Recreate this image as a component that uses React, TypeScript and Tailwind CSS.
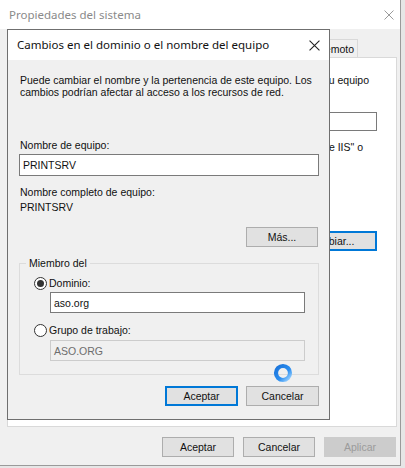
import React from 'react';

const body = "font-['Liberation_Sans',Arial,sans-serif] text-[10.5px] leading-[12px]";
const title = "font-['Noto_Sans',sans-serif] whitespace-nowrap";

function WinButton({ label, primary, disabled, width = 'w-[72px]' }: { label: string; primary?: boolean; disabled?: boolean; width?: string }) {
    return (
        <button
            className={`${width} h-[20px] flex items-center justify-center shrink-0 ${body} ${
                disabled
                    ? 'bg-[#cccccc] border border-[#cccccc] text-[#9b9b9b]'
                    : primary
                    ? 'bg-[#e1e1e1] border-2 border-[#0078d7] text-[#111]'
                    : 'bg-[#e1e1e1] border border-[#adadad] text-[#111]'
            }`}
        >
            {label}
        </button>
    );
}

function Radio({ checked }: { checked?: boolean }) {
    return (
        <span className="w-[13px] h-[13px] rounded-full border border-[#333] bg-white flex items-center justify-center shrink-0">
            {checked && <span className="w-[7px] h-[7px] rounded-full bg-[#333]" />}
        </span>
    );
}

function CloseIcon({ color, size }: { color: string; size: number }) {
    return (
        <svg width={size} height={size} viewBox="0 0 10 10">
            <path d="M0.5 0.5 L9.5 9.5 M9.5 0.5 L0.5 9.5" stroke={color} strokeWidth="1" fill="none" />
        </svg>
    );
}

function BusyCursor() {
    return (
        <svg width="22" height="22" viewBox="0 0 22 22">
            <defs>
                <linearGradient id="busy" x1="0" y1="0" x2="1" y2="1">
                    <stop offset="0" stopColor="#1a73d9" />
                    <stop offset="0.6" stopColor="#2b8ef0" />
                    <stop offset="1" stopColor="#9fd4ff" />
                </linearGradient>
            </defs>
            <circle cx="11" cy="11" r="7" stroke="url(#busy)" strokeWidth="4.2" fill="none" />
        </svg>
    );
}

function NameChangeDialog() {
    return (
        <div className="absolute left-[7px] top-[29px] w-[323px] h-[391px] border border-[#6f6f6f] bg-[#f0f0f0] flex flex-col">
            {/* Title bar */}
            <div className="h-[30px] bg-white flex items-center justify-between pl-[9px] pr-[9px] shrink-0">
                <span className={`${title} text-[11.5px] text-[#111]`}>
                    Cambios en el dominio o el nombre del equipo
                </span>
                <CloseIcon color="#222" size={11} />
            </div>

            <div className={`flex flex-col pl-[11px] pr-[10px] pt-[14px] text-[#111] ${body}`}>
                <p className="pl-[1px]">
                    Puede cambiar el nombre y la pertenencia de este equipo. Los
                    <br />
                    cambios podrían afectar al acceso a los recursos de red.
                </p>

                <label className="mt-[41px] pl-[1px]">Nombre de equipo:</label>
                <div className="mt-[3px] h-[22px] border border-[#7a7a7a] bg-white flex items-center px-[3px]">
                    PRINTSRV
                </div>

                <div className="mt-[10px] pl-[1px]">Nombre completo de equipo:</div>
                <div className="mt-[3px] pl-[1px]">PRINTSRV</div>

                <div className="mt-[14px] flex justify-end pr-[1px]">
                    <WinButton label="Más..." />
                </div>

                <fieldset className="mt-[10px] border border-[#dcdcdc]">
                    <legend className="ml-[6px] px-[3px]">Miembro del</legend>
                    <div className="flex flex-col pl-[14px] pr-[13px] pb-[13px]">
                        <div className="mt-[7px] h-[14px] flex items-center gap-[2px]">
                            <Radio checked />
                            <span>Dominio:</span>
                        </div>
                        <div className="mt-[2px] ml-[16px] h-[21px] border border-[#7a7a7a] bg-white flex items-center px-[3px]">
                            aso.org
                        </div>
                        <div className="mt-[10px] h-[14px] flex items-center gap-[2px]">
                            <Radio />
                            <span>Grupo de trabajo:</span>
                        </div>
                        <div className="mt-[3px] ml-[16px] h-[21px] border border-[#cccccc] bg-[#f0f0f0] flex items-center px-[3px] text-[#6d6d6d]">
                            ASO.ORG
                        </div>
                    </div>
                </fieldset>

                <div className="mt-[11px] flex justify-end gap-[8px]">
                    <WinButton label="Aceptar" primary width="w-[73px]" />
                    <WinButton label="Cancelar" width="w-[73px]" />
                </div>
            </div>
        </div>
    );
}

export default function App() {
    const tabs = ['Nombre de equipo', 'Hardware', 'Opciones avanzadas', 'Acceso remoto'];
    return (
        <div className="relative w-[405px] h-[468px] bg-[#e6e6e6] overflow-hidden">
            {/* System properties window */}
            <div className="w-[401px] h-[466px] border-r border-b border-[#9a9a9a] bg-[#f0f0f0] flex flex-col">
                <div className="h-[29px] bg-white flex items-center justify-between pl-[9px] pr-[6px] shrink-0">
                    <span className={`${title} text-[11.5px] text-[#8a8a8a]`}>Propiedades del sistema</span>
                    <CloseIcon color="#9a9a9a" size={10} />
                </div>

                <div className={`flex flex-col pl-[7px] pr-[3px] text-[#111] ${body}`}>
                    <div className="pt-[10px] flex justify-end pr-[39px]">
                        {tabs.map((t) => (
                            <div
                                key={t}
                                className="h-[18px] px-[3px] border border-b-0 border-[#d9d9d9] bg-[#f0f0f0] flex items-center whitespace-nowrap shrink-0 -ml-px"
                            >
                                {t}
                            </div>
                        ))}
                    </div>

                    <div className="h-[370px] border border-[#d9d9d9] bg-white flex flex-col pl-[12px] pr-[27px] pt-[16px]">
                        <p className="text-right whitespace-nowrap">
                            Windows usa la siguiente información para identificar su equipo
                        </p>
                        <div className="mt-[26px] flex items-center gap-[8px] -mr-[8px]">
                            <span>Descripción del equipo:</span>
                            <div className="flex-1 h-[19px] border border-[#7a7a7a] bg-white" />
                        </div>
                        <p className="mt-[10px] text-right whitespace-nowrap pr-[6px]">
                            Por ejemplo: &quot;Servidor de producción de IIS&quot; o
                        </p>
                        <div className="mt-[78px] flex justify-end -mr-[8px]">
                            <WinButton label="Cambiar..." primary width="w-[93px]" />
                        </div>
                    </div>

                    <div className="mt-[10px] flex justify-end gap-[9px] pr-[1px]">
                        <WinButton label="Aceptar" />
                        <WinButton label="Cancelar" />
                        <WinButton label="Aplicar" disabled />
                    </div>
                </div>
            </div>

            <NameChangeDialog />

            {/* busy cursor */}
            <div className="absolute left-[272px] top-[362px]">
                <BusyCursor />
            </div>
        </div>
    );
}
